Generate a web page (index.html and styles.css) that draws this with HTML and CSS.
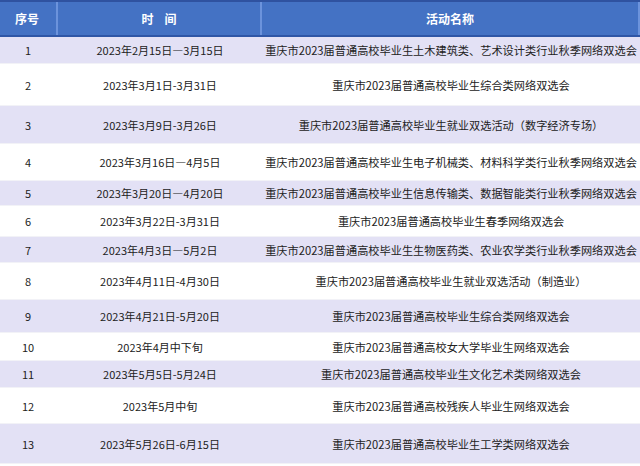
FILE: index.html
```html
<!DOCTYPE html>
<html lang="zh">
<head>
<meta charset="utf-8">
<link rel="stylesheet" href="styles.css">
</head>
<body>
<div class="table">
  <div class="row head">
    <div class="c1">序号</div>
    <div class="c2">时&nbsp;&nbsp;&nbsp;&nbsp;间</div>
    <div class="c3">活动名称</div>
  </div>
  <div class="row alt" style="height:27px"><div class="c1">1</div><div class="c2">2023年2月15日—3月15日</div><div class="c3">重庆市2023届普通高校毕业生土木建筑类、艺术设计类行业秋季网络双选会</div></div>
  <div class="row" style="height:42px"><div class="c1">2</div><div class="c2">2023年3月1日-3月31日</div><div class="c3">重庆市2023届普通高校毕业生综合类网络双选会</div></div>
  <div class="row alt" style="height:38px"><div class="c1">3</div><div class="c2">2023年3月9日-3月26日</div><div class="c3">重庆市2023届普通高校毕业生就业双选活动（数字经济专场）</div></div>
  <div class="row" style="height:37px"><div class="c1">4</div><div class="c2">2023年3月16日—4月5日</div><div class="c3">重庆市2023届普通高校毕业生电子机械类、材料科学类行业秋季网络双选会</div></div>
  <div class="row alt" style="height:25px"><div class="c1">5</div><div class="c2">2023年3月20日—4月20日</div><div class="c3">重庆市2023届普通高校毕业生信息传输类、数据智能类行业秋季网络双选会</div></div>
  <div class="row" style="height:31px"><div class="c1">6</div><div class="c2">2023年3月22日-3月31日</div><div class="c3">重庆市2023届普通高校毕业生春季网络双选会</div></div>
  <div class="row alt" style="height:26px"><div class="c1">7</div><div class="c2">2023年4月3日—5月2日</div><div class="c3">重庆市2023届普通高校毕业生生物医药类、农业农学类行业秋季网络双选会</div></div>
  <div class="row" style="height:37px"><div class="c1">8</div><div class="c2">2023年4月11日-4月30日</div><div class="c3">重庆市2023届普通高校毕业生就业双选活动（制造业）</div></div>
  <div class="row alt" style="height:33px"><div class="c1">9</div><div class="c2">2023年4月21日-5月20日</div><div class="c3">重庆市2023届普通高校毕业生综合类网络双选会</div></div>
  <div class="row" style="height:28px"><div class="c1">10</div><div class="c2">2023年4月中下旬</div><div class="c3">重庆市2023届普通高校女大学毕业生网络双选会</div></div>
  <div class="row alt" style="height:27px"><div class="c1">11</div><div class="c2">2023年5月5日-5月24日</div><div class="c3">重庆市2023届普通高校毕业生文化艺术类网络双选会</div></div>
  <div class="row" style="height:36px"><div class="c1">12</div><div class="c2">2023年5月中旬</div><div class="c3">重庆市2023届普通高校残疾人毕业生网络双选会</div></div>
  <div class="row alt" style="height:40px"><div class="c1">13</div><div class="c2">2023年5月26日-6月15日</div><div class="c3">重庆市2023届普通高校毕业生工学类网络双选会</div></div>
</div>
</body>
</html>
```
FILE: styles.css
```css
html, body {
  margin: 0;
  padding: 0;
  background: #ffffff;
}
body {
  width: 640px;
  height: 466px;
  overflow: hidden;
  font-family: "Noto Sans CJK SC", "Noto Sans", sans-serif;
  font-size: 11px;
  color: #222222;
}
.table {
  display: flex;
  flex-direction: column;
}
.row {
  display: grid;
  grid-template-columns: 58px 204px 378px;
  align-items: center;
  border-bottom: 1px solid #f2f2f7;
  box-sizing: border-box;
}
.row > div {
  text-align: center;
  white-space: nowrap;
  height: 100%;
  display: flex;
  align-items: center;
  justify-content: center;
}
.row .c1 {
  padding-right: 2px;
}
.row .c3 {
  font-size: 11.2px;
}
.alt {
  background: #e3e1f5;
}
.head {
  height: 37px;
  background: #4472c4;
  border-top: 2px solid #2f52a0;
  border-bottom: 2px solid #2f56a6;
  color: #ffffff;
  font-weight: bold;
  font-size: 12px;
}
.head .c1, .head .c2 {
  border-right: 2px solid #6c93dc;
}
.head .c3 {
  border-right: 2px solid #6c93dc;
}
.head .c3 {
  font-size: 12px;
}
```
